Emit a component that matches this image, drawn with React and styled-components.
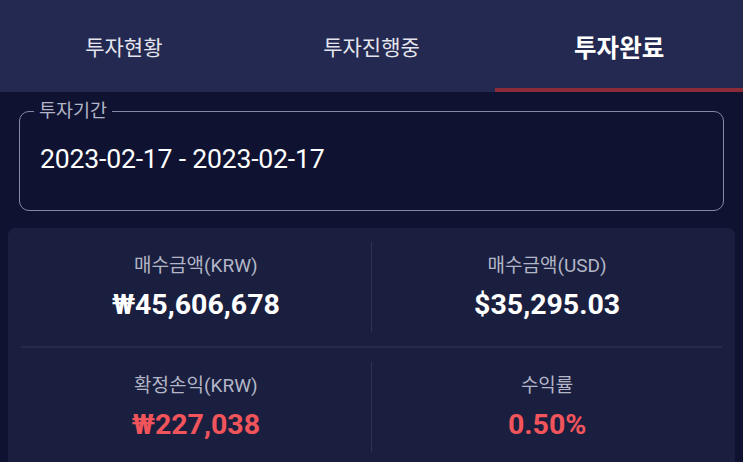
import React from "react";
import styled, { createGlobalStyle } from "styled-components";

const GlobalStyle = createGlobalStyle`
  html, body {
    margin: 0;
    padding: 0;
    background: #0f1331;
    overflow: hidden;
  }
  body {
    font-family: Roboto, "Noto Sans CJK KR", "Noto Sans", sans-serif;
    color: #ffffff;
  }
  * { box-sizing: border-box; }
`;

const Page = styled.div`
  width: 743px;
  min-height: 462px;
  background: #0f1331;
  display: flex;
  flex-direction: column;
`;

const TabBar = styled.div`
  flex-shrink: 0;
  display: grid;
  grid-template-columns: repeat(3, 1fr);
  height: 92px;
  background: #232950;
`;

const Tab = styled.div`
  display: flex;
  align-items: center;
  justify-content: center;
  padding-top: 4px;
  border-bottom: 4px solid ${(p) => (p.$active ? "#8b2c38" : "transparent")};
  font-size: ${(p) => (p.$active ? "24.5px" : "21px")};
  font-weight: ${(p) => (p.$active ? 700 : 400)};
  color: ${(p) => (p.$active ? "#ffffff" : "#e4e5ee")};
`;

const Main = styled.div`
  flex-shrink: 0;
  display: flex;
  flex-direction: column;
  padding: 8px 8px 0;
`;

const Period = styled.fieldset`
  margin: 0 11px 17px;
  padding: 22px 20px 36px;
  border: 1.8px solid #858aa4;
  border-radius: 10px;
  min-width: 0;
`;

const PeriodLegend = styled.legend`
  margin-left: -6px;
  padding: 0 5px;
  font-size: 18.5px;
  line-height: 22px;
  color: #b2b5c6;
`;

const PeriodValue = styled.div`
  font-size: 26.6px;
  line-height: 30px;
  color: #ffffff;
  letter-spacing: -0.2px;
`;

const Card = styled.div`
  background: #1b1f3f;
  border-radius: 7px;
  padding: 14px 13px;
`;

const StatRow = styled.div`
  display: grid;
  grid-template-columns: 1fr 1.5px 1fr;
  height: 90px;
`;

const VLine = styled.div`
  background: #2d3256;
`;

const HLine = styled.div`
  height: 1.5px;
  background: #262b4d;
  margin: 14px 0 14px;
`;

const Stat = styled.div`
  display: flex;
  flex-direction: column;
  align-items: center;
  justify-content: center;
  gap: 12px;
  padding-top: 2px;
`;

const StatLabel = styled.div`
  font-size: 19px;
  line-height: 22px;
  color: #b3b6c7;
`;

const StatValue = styled.div`
  font-size: 28.5px;
  line-height: 32px;
  font-weight: 700;
  color: ${(p) => (p.$negative ? "#f1545b" : "#ffffff")};
`;

const tabs = ["투자현황", "투자진행중", "투자완료"];

const rows = [
  [
    { label: "매수금액(KRW)", value: "₩45,606,678" },
    { label: "매수금액(USD)", value: "$35,295.03" },
  ],
  [
    { label: "확정손익(KRW)", value: "₩227,038", red: true },
    { label: "수익률", value: "0.50%", red: true },
  ],
];

export default function App() {
  return (
    <>
      <GlobalStyle />
      <Page>
        <TabBar>
          {tabs.map((t, i) => (
            <Tab key={t} $active={i === 2}>
              {t}
            </Tab>
          ))}
        </TabBar>
        <Main>
          <Period>
            <PeriodLegend>투자기간</PeriodLegend>
            <PeriodValue>2023-02-17 - 2023-02-17</PeriodValue>
          </Period>
          <Card>
            {rows.map((row, ri) => (
              <React.Fragment key={ri}>
                {ri > 0 && <HLine />}
                <StatRow>
                  <Stat>
                    <StatLabel>{row[0].label}</StatLabel>
                    <StatValue $negative={row[0].red}>{row[0].value}</StatValue>
                  </Stat>
                  <VLine />
                  <Stat>
                    <StatLabel>{row[1].label}</StatLabel>
                    <StatValue $negative={row[1].red}>{row[1].value}</StatValue>
                  </Stat>
                </StatRow>
              </React.Fragment>
            ))}
          </Card>
        </Main>
      </Page>
    </>
  );
}
